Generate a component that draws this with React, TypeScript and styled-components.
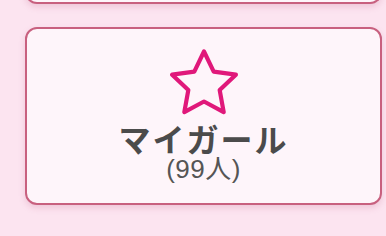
import styled, { createGlobalStyle } from 'styled-components'

const GlobalStyle = createGlobalStyle`
  html, body {
    margin: 0;
    padding: 0;
    background: #fce4f0;
    font-family: "Noto Sans CJK JP", "Noto Sans", sans-serif;
  }
`

const Page = styled.div`
  width: 386px;
  height: 236px;
  overflow: hidden;
  display: flex;
  flex-direction: column;
  gap: 23px;
  padding: 0 4px 0 25px;
  box-sizing: border-box;
`

const Card = styled.div<{ $clipped?: boolean }>`
  background: #fef5fa;
  border: 2.5px solid #c8607f;
  border-radius: 12px;
  box-shadow: 0 3px 6px rgba(190, 90, 130, 0.22);
  display: flex;
  flex-direction: column;
  align-items: center;
  ${(p) =>
    p.$clipped
      ? `
    border-top: none;
    border-radius: 0 0 12px 12px;
    height: 14px;
    margin-top: -12px;
  `
      : `
    height: 178px;
    box-sizing: border-box;
    padding-top: 20px;
  `}
`

const Title = styled.div`
  margin-top: 7px;
  font-size: 32px;
  font-weight: 700;
  color: #4b4b4b;
  line-height: 32px;
  letter-spacing: 2px;
`

const Count = styled.div`
  margin-top: 2px;
  font-family: "Liberation Sans", "Noto Sans CJK JP", sans-serif;
  font-size: 26px;
  color: #555;
  line-height: 27px;
  letter-spacing: 0.5px;
`

function StarIcon() {
  const pts: string[] = []
  const R = 33.5
  const r = 16.5
  const cx = 36
  const cy = 36
  for (let i = 0; i < 10; i++) {
    const rad = i % 2 === 0 ? R : r
    const a = (Math.PI / 5) * i - Math.PI / 2
    pts.push(`${(cx + rad * Math.cos(a)).toFixed(2)},${(cy + rad * Math.sin(a)).toFixed(2)}`)
  }
  return (
    <svg width="72" height="66" viewBox="0 0 72 66">
      <polygon
        points={pts.join(' ')}
        fill="none"
        stroke="#e0187a"
        strokeWidth="4.2"
        strokeLinejoin="round"
      />
    </svg>
  )
}

export default function App() {
  return (
    <>
      <GlobalStyle />
      <Page>
        <Card $clipped />
        <Card>
          <StarIcon />
          <Title>マイガール</Title>
          <Count>(99人)</Count>
        </Card>
      </Page>
    </>
  )
}
